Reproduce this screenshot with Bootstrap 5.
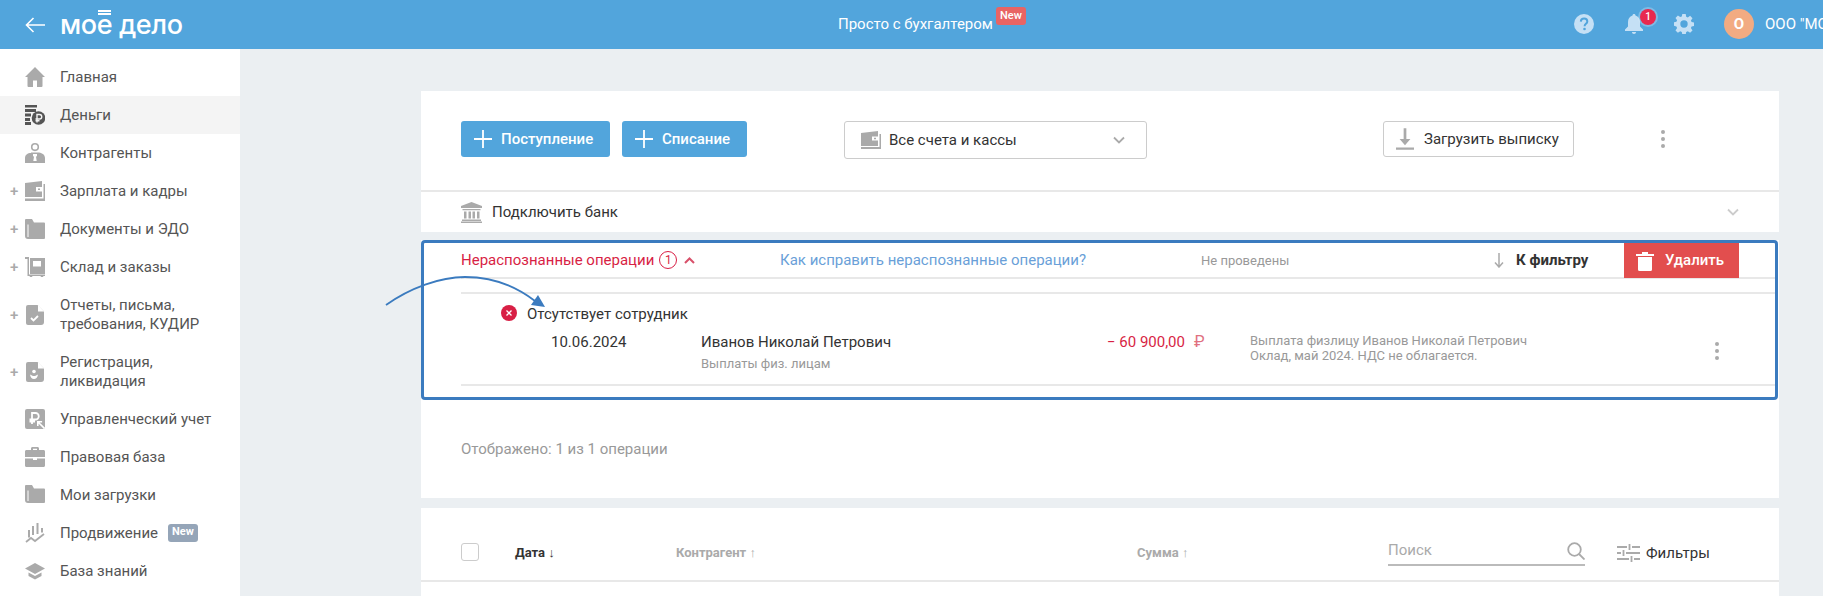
<!DOCTYPE html>
<html lang="ru"><head><meta charset="utf-8"><title>Деньги</title>
<link href="https://cdn.jsdelivr.net/npm/bootstrap@5.3.0/dist/css/bootstrap.min.css" rel="stylesheet">
<style>
html,body{height:100%;overflow:hidden}
body{font-family:Roboto,"Liberation Sans",sans-serif;font-size:15px;color:#333;background:#ebeff2;width:1823px;height:596px;position:relative}
.topbar{height:49px;background:#52a5dc;color:#fff;overflow:hidden}
.back-ico{margin-left:25px;width:20px;height:16px}
.logo-txt{font-family:Inter,"Liberation Sans",sans-serif;font-size:27px;font-weight:500;letter-spacing:-.4px;margin-left:15px;line-height:49px;white-space:nowrap}
.logo-e{position:relative;display:inline-block}
.logo-e::before{content:"";position:absolute;left:1px;right:1px;top:10px;height:5px;border-top:2px solid #fff;border-bottom:2px solid #fff}
.promo{position:absolute;left:838px;top:0;line-height:49px;white-space:nowrap}
.promo-badge{position:absolute;left:158px;top:7px;width:30px;height:18px;background:#e86464;border-radius:3px;font-size:11px;font-weight:500;line-height:17px;text-align:center}
.tb-ico{position:absolute;top:14px;width:20px;height:20px}
.bell-badge{position:absolute;left:1640px;top:9px;width:16px;height:16px;background:#e8294f;border-radius:50%;box-shadow:0 0 0 2px rgba(255,255,255,.25);font-size:10px;line-height:16px;text-align:center;font-weight:500}
.avatar{position:absolute;left:1724px;top:9px;width:30px;height:30px;border-radius:50%;background:#f2ab82;font-size:15px;font-weight:700;line-height:30px;text-align:center}
.org{position:absolute;left:1765px;top:0;line-height:48px;white-space:nowrap}
.side{width:240px;height:547px;background:#fff;padding-top:9px;flex:none;overflow:hidden}
.nav-row{height:38px;display:flex;align-items:center;color:#555;font-size:15px;line-height:19px;position:relative;padding-left:25px}
.nav-row.tall{height:57px}
.nav-row.on{background:#f4f4f4}
.nav-row svg{width:20px;height:20px;flex:none;margin-right:15px}
.plus-mark{position:absolute;left:10px;top:50%;transform:translateY(-50%);color:#aaa;font-size:15px;font-weight:500;line-height:1}
.new-tag{display:inline-block;background:#95a5b8;color:#fff;border-radius:3px;font-size:11px;font-weight:700;width:30px;height:18px;line-height:16px;text-align:center;margin-left:10px}
.content{width:1358px;margin-left:181px;margin-top:42px;flex:none}
.panel-top{background:#fff;height:407px}
.tools{height:101px;padding:30px 0 0 40px;border-bottom:2px solid #e8e8e8;position:relative}
.act-btn{height:36px;background:#52a5dc;color:#fff;border:0;border-radius:3px;font-size:15px;font-weight:500;display:inline-flex;align-items:center;padding:0 10px 0 13px;white-space:nowrap}
.act-btn svg{width:18px;height:18px;margin-right:9px;flex:none}
.w1{width:149px}.w2{width:125px;margin-left:12px}
.acct{width:303px;height:38px;border:1px solid #ccc;border-radius:3px;margin-left:97px;padding:0 21px 0 16px;color:#333}
.upload{width:191px;height:36px;border:1px solid #ccc;border-radius:3px;margin-left:236px;padding-left:12px;white-space:nowrap}
.up-ico{margin-right:10px;flex:none}
.dots{display:flex;flex-direction:column;gap:3px;width:4px}
.dots i{width:4px;height:4px;border-radius:50%;background:#aaa;display:block}
.bank{height:40px;padding:0 40px 0 40px;color:#333}
.bank-ico{margin-right:10px;flex:none}
.gap-strip{height:8px;background:#ebeff2}
.box{height:160px;width:1357px;border:3px solid #3b7bbf;border-radius:4px;background:#fff}
.box-head{height:36px;margin-left:37px;border-bottom:2px solid #e8e8e8;position:relative;line-height:35px}
.red-txt{color:#d81f45}
.count-ring{width:18px;height:18px;border:1px solid #d81f45;border-radius:50%;font-size:12px;line-height:16px;text-align:center;margin-left:5px;display:inline-block;vertical-align:1px}
.chev-up{margin-left:3px;vertical-align:1px}
.how{position:absolute;left:319px;top:0;line-height:35px;color:#6a9fd8}
.not-posted{position:absolute;left:740px;top:0;line-height:35px;color:#999;font-size:13px}
.tofilter{position:absolute;left:1055px;top:0;line-height:35px;font-weight:700;color:#333;font-size:15px}
.arr-ico{position:absolute;left:1033px;top:10px;width:10px;height:15px}
.del-btn{position:absolute;left:1163px;top:0;width:115px;height:35px;background:#e24e4e;color:#fff;border:0;font-size:15px;font-weight:500;display:flex;align-items:center;padding:0 0 0 12px}
.del-btn svg{width:18px;height:20px;margin-right:11px;flex:none}
.op-area{margin:13px 0 0 37px;height:94px;border-top:2px solid #e8e8e8;border-bottom:2px solid #e8e8e8;position:relative}
.op-err{position:absolute;left:66px;top:10px;line-height:20px}
.err-dot{position:absolute;left:40px;top:11px;width:16px;height:16px}
.op-date{position:absolute;left:90px;top:38px;line-height:20px}
.op-name{position:absolute;left:240px;top:38px;line-height:20px;white-space:nowrap}
.op-sub{position:absolute;left:240px;top:62px;line-height:16px;font-size:13px;color:#999}
.op-sum{position:absolute;left:646px;top:38px;line-height:20px;color:#d81f45;white-space:nowrap}
.op-rub{color:#e0707f;margin-left:9px;font-size:16px}
.op-desc{position:absolute;left:789px;top:39px;line-height:15px;font-size:13px;color:#999;white-space:nowrap}
.op-dots{position:absolute;left:1254px;top:48px}
.shown{padding:40px 0 0 40px;color:#999;line-height:18px}
.panel-bot{background:#fff;height:88px;margin-top:10px;position:relative}
.panel-bot .rule{position:absolute;left:0;right:0;top:72px;border-top:2px solid #e8e8e8}
.cbx{position:absolute;left:40px;top:35px;width:18px;height:18px;border:1px solid #ccc;border-radius:3px}
.th{position:absolute;top:37px;font-size:13px;font-weight:700;color:#aaa;line-height:16px}
.th.act{color:#333}
.srch{position:absolute;left:967px;top:25px;width:197px;height:33px;padding-top:6px;border-bottom:2px solid #bbb;color:#aaa;line-height:22px}
.srch svg{position:absolute;right:0;top:9px;width:18px;height:18px}
.flt{position:absolute;left:1196px;top:35px;display:flex;align-items:center;gap:6px;line-height:20px;color:#333}
.flt svg{width:23px;height:20px}
.arrow-over{position:absolute;left:380px;top:270px;width:175px;height:45px;pointer-events:none}
</style></head><body>
<header class="topbar d-flex align-items-center">
<svg class="back-ico" viewBox="0 0 20 16" fill="none" stroke="#fff" stroke-width="1.6"><path d="M20 8H1.500M8.500 1 1.500 8l7 7"/></svg>
<span class="logo-txt">мо<span class="logo-e">е</span> дело</span>
<div class="promo">Просто с бухгалтером<span class="promo-badge">New</span></div>
<svg class="tb-ico" style="left:1574px" viewBox="0 0 20 20"><circle cx="10" cy="10" r="10" fill="#c5e0f5"/><path d="M6.800 7.600C6.900 5.600 8.300 4.600 10.100 4.600c1.900 0 3.200 1.100 3.200 2.800 0 2.500-2.700 2.400-2.700 4.800" fill="none" stroke="#52a5dc" stroke-width="2"/><circle cx="10.500" cy="15" r="1.300" fill="#52a5dc"/></svg>
<svg class="tb-ico" style="left:1624px" viewBox="0 0 20 20"><path d="M10 0c1 0 1.500.7 1.500 1.500C14.500 2.300 16 5 16 8v4.500l3 3V17H1v-1.500l3-3V8c0-3 1.500-5.700 4.500-6.500C8.500.7 9 0 10 0z" fill="#c5e0f5"/><path d="M8 18h4c0 1.200-.8 2-2 2s-2-.8-2-2z" fill="#c5e0f5"/></svg>
<span class="bell-badge">1</span>
<svg class="tb-ico" style="left:1674px" viewBox="0 0 20 20"><path fill="#c5e0f5" fill-rule="evenodd" d="M8.300 0h3.400l.5 2.700 1.600.7 2.300-1.600 2.400 2.400-1.600 2.300.7 1.600 2.700.5v3.400l-2.700.5-.7 1.600 1.600 2.300-2.400 2.400-2.300-1.600-1.600.7-.5 2.700H8.300l-.5-2.700-1.600-.7-2.300 1.600-2.400-2.400 1.600-2.300-.7-1.600L-.3 11.700V8.300l2.700-.5.7-1.600-1.600-2.300 2.400-2.400 2.300 1.600 1.600-.7zM10 6.300a3.700 3.700 0 1 0 0 7.400 3.700 3.700 0 0 0 0-7.400z"/></svg>
<span class="avatar">О</span>
<span class="org">ООО "МОЕ ДЕЛО"</span>
</header>
<div class="d-flex">
<nav class="side">
<div class="nav-row"><svg viewBox="0 0 20 20" fill="#aaa"><path d="M10 0 20 10h-2.500v9a1 1 0 0 1-1 1H12v-6.500H8V20H3.500a1 1 0 0 1-1-1v-9H0z"/></svg>Главная</div>
<div class="nav-row on"><svg viewBox="0 0 20 20" fill="#555"><path d="M0 0h12v2.500H0zM0 4h11v3H0zM0 8.500h6v3H0zM0 13h5v3H0zM0 17h6v3H0z"/><circle cx="13.500" cy="13" r="6.800"/><path d="M12 17.500V9.500h2.500a2.200 2.200 0 0 1 0 4.500H10.500M10.500 15.700h4" fill="none" stroke="#f4f4f4" stroke-width="1.400"/></svg>Деньги</div>
<div class="nav-row"><svg viewBox="0 0 20 20" fill="#aaa"><path fill-rule="evenodd" d="M10 0a4 4 0 1 1 0 8.200A4 4 0 0 1 10 0zm0 1.600a2.500 2.500 0 1 0 0 5 2.500 2.500 0 0 0 0-5z"/><path d="M6 9.500h8c3.500.5 6 2.500 6 5.500v5H0v-5c0-3 2.500-5 6-5z"/><path d="M8 11h4v2l-1 .7.700 4.300H8.300L9 13.700 8 13z" fill="#fff"/></svg>Контрагенты</div>
<div class="nav-row"><span class="plus-mark">+</span><svg viewBox="0 0 20 20" fill="#aaa"><path fill-rule="evenodd" d="M0 2 17 0v16H0zm11 4v4.500h6V6zm2 1.400h2v1.600h-2z"/><path d="M18.500 3H20v17H0v-2.500h18.500z"/></svg>Зарплата и кадры</div>
<div class="nav-row"><span class="plus-mark">+</span><svg viewBox="0 0 20 20" fill="#aaa"><path d="M1 0h6l2 3.500h10a1 1 0 0 1 1 1V19a1 1 0 0 1-1 1H3a3 3 0 0 1-3-3V1a1 1 0 0 1 1-1z"/><path d="M3 5.500V18" stroke="#fff" stroke-width="1" fill="none"/></svg>Документы и ЭДО</div>
<div class="nav-row"><span class="plus-mark">+</span><svg viewBox="0 0 20 20" fill="#aaa"><path fill-rule="evenodd" d="M5 1h15v16H5zm3 3v5.500h8V4z"/><path d="M0 0h4v17.500h16V19H2.500V2H0z"/><circle cx="6" cy="19.500" r="1.300"/><circle cx="17" cy="19.500" r="1.300"/></svg>Склад и заказы</div>
<div class="nav-row tall"><span class="plus-mark">+</span><svg viewBox="0 0 20 20" fill="#aaa"><path d="M3 0h9.500L19 6.500V17a3 3 0 0 1-3 3H3a2 2 0 0 1-2-2V2a2 2 0 0 1 2-2z"/><path d="M13 0v6.500h6" fill="#fff"/><path d="m6 13 2.500 2.500L13 11" fill="none" stroke="#fff" stroke-width="1.800"/></svg><span>Отчеты, письма,<br>требования, КУДИР</span></div>
<div class="nav-row tall"><span class="plus-mark">+</span><svg viewBox="0 0 20 20" fill="#aaa"><path d="M3 0h9.500L19 6.500V17a3 3 0 0 1-3 3H3a2 2 0 0 1-2-2V2a2 2 0 0 1 2-2z"/><path d="M13 0v6.500h6" fill="#fff"/><circle cx="9" cy="9.500" r="1.800" fill="#fff"/><path d="M5 12.500c.5 3 2 4.500 4 4.500s3.500-1.500 4-4.500l-2 1c-1 .7-3 .7-4 0z" fill="#fff"/></svg><span>Регистрация,<br>ликвидация</span></div>
<div class="nav-row"><svg viewBox="0 0 20 20" fill="#aaa"><rect width="20" height="20" rx="2"/><path d="M7 15V4h3.500a3 3 0 0 1 0 6.500H4.500M4.500 12.500H10" fill="none" stroke="#fff" stroke-width="1.800"/><path d="M19.500 19.500 13.500 13.500M12.800 17v-4.300h4.300" fill="none" stroke="#fff" stroke-width="1.600"/></svg>Управленческий учет</div>
<div class="nav-row"><svg viewBox="0 0 20 20" fill="#aaa"><path d="M6 3V1.500C6 .6 6.600 0 7.500 0h5c.9 0 1.500.6 1.500 1.500V3h4.500c.9 0 1.500.6 1.500 1.500V10H0V4.500C0 3.600.6 3 1.500 3zm2 0h4V1.800H8z"/><path d="M0 11.500h8V13h4v-1.500h8V18.500c0 .9-.6 1.500-1.500 1.500h-17C.6 20 0 19.400 0 18.500z"/></svg>Правовая база</div>
<div class="nav-row"><svg viewBox="0 0 20 20" fill="#aaa"><path d="M1 0h6l2 3.500h10a1 1 0 0 1 1 1V17a1 1 0 0 1-1 1H3a3 3 0 0 1-3-3V1a1 1 0 0 1 1-1z"/><path d="M3 5.500V16" stroke="#fff" stroke-width="1" fill="none"/></svg>Мои загрузки</div>
<div class="nav-row"><svg viewBox="0 0 20 20" fill="#aaa"><path d="M3 7h2v7.500H3zM7 3h2v9H7zM11.500 0h2v11h-2zM16 5h2v4.500h-2z"/><path d="m1 19 5-4 4 3 9-7" fill="none" stroke="#aaa" stroke-width="1.800"/></svg>Продвижение<span class="new-tag">New</span></div>
<div class="nav-row"><svg viewBox="0 0 20 20" fill="#aaa"><path d="M10 2 20 7.500 10 13 0 7.500z"/><path d="M3.500 11.500 10 15l6.500-3.500V15L10 18.500 3.500 15z"/></svg>База знаний</div>
</nav>
<main class="content">
<section class="panel-top">
<div class="tools d-flex align-items-start">
<button class="act-btn w1"><svg viewBox="0 0 18 18" fill="none" stroke="#fff" stroke-width="1.800"><path d="M9 0v18M0 9h18"/></svg>Поступление</button>
<button class="act-btn w2"><svg viewBox="0 0 18 18" fill="none" stroke="#fff" stroke-width="1.800"><path d="M9 0v18M0 9h18"/></svg>Списание</button>
<div class="acct d-flex align-items-center"><svg width="20" height="20" viewBox="0 0 20 20" fill="#aaa" class="me-2 flex-shrink-0"><path fill-rule="evenodd" d="M0 3 17 1v15H0zm11 3.500v4h6v-4zm2 1.200h2v1.500h-2z"/><path d="M18.500 4H20v15H0v-2h18.500z"/></svg><span class="flex-grow-1">Все счета и кассы</span><svg width="12" height="8" viewBox="0 0 12 8" fill="none" stroke="#aaa" stroke-width="1.800"><path d="m1 1.500 5 5 5-5"/></svg></div>
<div class="upload d-flex align-items-center"><svg width="18" height="22" viewBox="0 0 20 24" fill="#aaa" class="up-ico"><path d="M8.500 0h3v12H16l-6 7-6-7h4.500zM0 21.500h20V24H0z"/></svg><span>Загрузить выписку</span></div>
<div class="dots" style="margin:9px 0 0 87px"><i></i><i></i><i></i></div>
</div>
<div class="bank d-flex align-items-center"><svg width="21" height="21" viewBox="0 0 21 21" fill="#aaa" class="bank-ico"><path d="M10.500 0 21 4v2H0V4zM1.500 7h18v1.200h-18zM3 9.500h2.500v7H3zM7.500 9.500H10v7H7.500zM11.500 9.500H14v7h-2.500zM16 9.500h2.500v7H16zM1 17.500h19V19H1zM0 19.500h21V21H0z"/></svg><span class="flex-grow-1">Подключить банк</span><svg width="12" height="8" viewBox="0 0 12 8" fill="none" stroke="#ccc" stroke-width="1.800"><path d="m1 1.500 5 5 5-5"/></svg></div>
<div class="gap-strip"></div>
<div class="box">
<div class="box-head">
<span class="red-txt">Нераспознанные операции</span><span class="count-ring red-txt">1</span>
<svg class="chev-up" width="11" height="7" viewBox="0 0 11 7" fill="none" stroke="#d8506a" stroke-width="2"><path d="m1 6 4.500-4.500L10 6"/></svg>
<span class="how">Как исправить нераспознанные операции?</span>
<span class="not-posted">Не проведены</span>
<svg class="arr-ico" viewBox="0 0 10 15" fill="none" stroke="#aaa" stroke-width="1.500"><path d="M5 0v14M1 9.500 5 14l4-4.500"/></svg>
<span class="tofilter">К фильтру</span>
<button class="del-btn"><svg viewBox="0 0 18 20" fill="#fff"><path d="M0 3h18v2H0zM6 1h6v2H6zM2 6h14v12.500a1.500 1.500 0 0 1-1.500 1.500h-11A1.500 1.500 0 0 1 2 18.500z"/></svg>Удалить</button>
</div>
<div class="op-area">
<svg class="err-dot" viewBox="0 0 16 16"><circle cx="8" cy="8" r="8" fill="#d81f45"/><path d="m5.500 5.500 5 5m0-5-5 5" stroke="#fff" stroke-width="1.300"/></svg>
<span class="op-err">Отсутствует сотрудник</span>
<span class="op-date">10.06.2024</span>
<span class="op-name">Иванов Николай Петрович</span>
<span class="op-sub">Выплаты физ. лицам</span>
<span class="op-sum">− 60 900,00<span class="op-rub">₽</span></span>
<span class="op-desc">Выплата физлицу Иванов Николай Петрович<br>Оклад, май 2024. НДС не облагается.</span>
<div class="dots op-dots"><i></i><i></i><i></i></div>
</div>
</div>
<div class="shown">Отображено: 1 из 1 операции</div>
</section>
<section class="panel-bot">
<span class="cbx"></span>
<span class="th act" style="left:94px">Дата ↓</span>
<span class="th" style="left:255px">Контрагент ↑</span>
<span class="th" style="left:716px">Сумма ↑</span>
<div class="srch">Поиск<svg viewBox="0 0 18 18" fill="none" stroke="#aaa" stroke-width="1.800"><circle cx="7.500" cy="7.500" r="6.300"/><path d="m12 12 5.500 5.500"/></svg></div>
<div class="flt"><svg viewBox="0 0 23 20" fill="none" stroke="#aaa" stroke-width="1.800"><path d="M0 4h10M15 4h8M12.500 1v6M0 10h4M9 10h14M6.500 7v6M0 16h12M17 16h6M14.500 13v6"/></svg>Фильтры</div>
<div class="rule"></div>
</section>
</main>
</div>
<svg class="arrow-over" viewBox="0 0 175 45" fill="none"><path d="M6 35C30 18 60 7 85 7c28 0 52 10 70 24" stroke="#3b7bbf" stroke-width="1.800"/><path d="m165 37-14-2 7-10z" fill="#3b7bbf"/></svg>
</body></html>
